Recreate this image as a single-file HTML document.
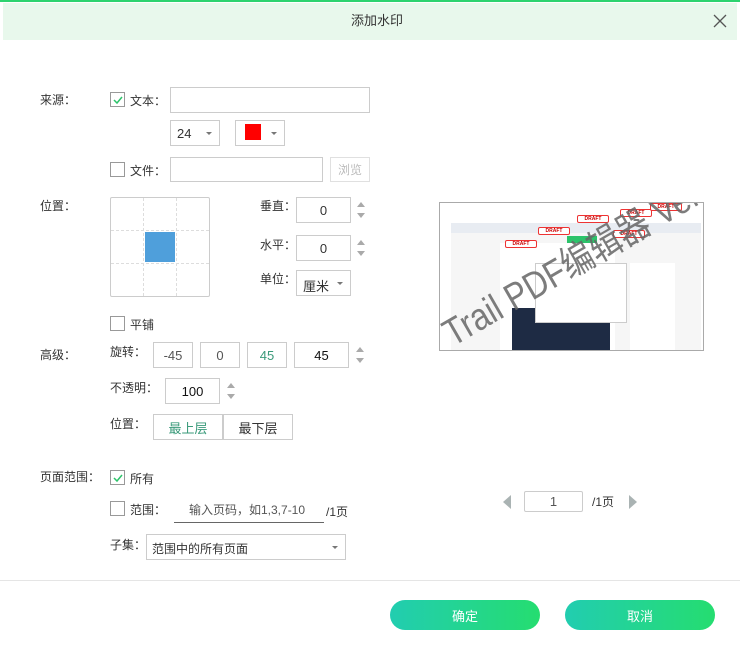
<!DOCTYPE html>
<html><head><meta charset="utf-8"><style>
*{box-sizing:border-box;margin:0;padding:0}
body{width:740px;height:650px;background:#fff;position:relative;overflow:hidden;font-family:"Liberation Sans","Noto Sans CJK SC",sans-serif;font-size:12px;color:#333}
.a{position:absolute}
.box{position:absolute;border:1px solid #ccc;background:#fff}
.cb{position:absolute;width:15px;height:15px;border:1px solid #999;background:#fff}
.t{position:absolute;line-height:14px;white-space:nowrap}
.num{display:flex;align-items:center;justify-content:center;font-size:13px}
.sp{position:absolute;width:8px;height:20px}
.sp:before{content:"";position:absolute;left:0;top:2px;border:4px solid transparent;border-bottom:5px solid #aaa;border-top:0}
.sp:after{content:"";position:absolute;left:0;bottom:2px;border:4px solid transparent;border-top:5px solid #aaa;border-bottom:0}
.dd:after{content:"";position:absolute;right:7px;top:50%;margin-top:-1px;border:3px solid transparent;border-top:3px solid #777}
.btn{position:absolute;border-radius:16px;background:linear-gradient(90deg,#22cdb0,#25dd70);color:#fff;font-size:13px;display:flex;align-items:center;justify-content:center}
.dr{position:absolute;width:32px;height:8px;border:1px solid #e33;border-radius:2px;background:#fff;color:#c00;font-size:5px;line-height:6px;text-align:center;font-weight:bold}
</style></head><body>
<div class="a" style="left:0;top:0;width:740px;height:2px;background:#2dd36f"></div>
<div class="a" style="left:3px;top:3px;width:734px;height:37px;background:#e8f8ec"></div>
<div class="t" style="left:351px;top:14px;font-size:13px">添加水印</div>
<svg class="a" style="left:713px;top:14px" width="14" height="14"><path d="M1 1L13 13M13 1L1 13" stroke="#555" stroke-width="1.3"/></svg>

<div class="t" style="left:40px;top:93px">来源：</div>
<div class="cb" style="left:110px;top:92px"></div>
<svg class="a" style="left:112px;top:94px" width="11" height="11"><path d="M2 6L5 9L10 3" stroke="#2cc36a" stroke-width="1.5" fill="none"/></svg>
<div class="t" style="left:130px;top:94px">文本：</div>
<div class="box" style="left:170px;top:87px;width:200px;height:26px"></div>
<div class="box dd num" style="left:170px;top:120px;width:50px;height:26px;justify-content:flex-start;padding-left:6px">24</div>
<div class="box dd" style="left:235px;top:120px;width:50px;height:26px"></div>
<div class="a" style="left:245px;top:124px;width:16px;height:16px;background:#f00"></div>
<div class="cb" style="left:110px;top:162px"></div>
<div class="t" style="left:130px;top:164px">文件：</div>
<div class="box" style="left:170px;top:157px;width:153px;height:25px"></div>
<div class="box num" style="left:330px;top:157px;width:40px;height:25px;border-color:#e0e0e0;color:#bbb;font-size:12px">浏览</div>

<div class="t" style="left:40px;top:199px">位置：</div>
<div class="box" style="left:110px;top:197px;width:100px;height:100px;border-radius:2px"></div>
<div class="a" style="left:143px;top:198px;height:98px;border-left:1px dashed #ddd"></div>
<div class="a" style="left:176px;top:198px;height:98px;border-left:1px dashed #ddd"></div>
<div class="a" style="left:111px;top:230px;width:98px;border-top:1px dashed #ddd"></div>
<div class="a" style="left:111px;top:263px;width:98px;border-top:1px dashed #ddd"></div>
<div class="a" style="left:145px;top:232px;width:30px;height:30px;background:#4f9fdb"></div>
<div class="t" style="left:260px;top:199px">垂直：</div>
<div class="box num" style="left:296px;top:197px;width:55px;height:26px">0</div>
<div class="sp" style="left:357px;top:200px"></div>
<div class="t" style="left:260px;top:238px">水平：</div>
<div class="box num" style="left:296px;top:235px;width:55px;height:26px">0</div>
<div class="sp" style="left:357px;top:238px"></div>
<div class="t" style="left:260px;top:272px">单位：</div>
<div class="box dd" style="left:296px;top:270px;width:55px;height:26px;padding:5px 0 0 6px;font-size:13px">厘米</div>

<div class="cb" style="left:110px;top:316px"></div>
<div class="t" style="left:130px;top:318px">平铺</div>
<div class="t" style="left:40px;top:348px">高级：</div>
<div class="t" style="left:110px;top:345px">旋转：</div>
<div class="box num" style="left:153px;top:342px;width:40px;height:26px;color:#555">-45</div>
<div class="box num" style="left:200px;top:342px;width:40px;height:26px;color:#555">0</div>
<div class="box num" style="left:247px;top:342px;width:40px;height:26px;color:#3a9a7a">45</div>
<div class="box num" style="left:294px;top:342px;width:55px;height:26px;color:#111">45</div>
<div class="sp" style="left:356px;top:345px"></div>
<div class="t" style="left:110px;top:381px">不透明：</div>
<div class="box num" style="left:165px;top:378px;width:55px;height:26px;color:#111">100</div>
<div class="sp" style="left:227px;top:381px"></div>
<div class="t" style="left:110px;top:417px">位置：</div>
<div class="box num" style="left:153px;top:414px;width:70px;height:26px;color:#3a9a7a">最上层</div>
<div class="box num" style="left:223px;top:414px;width:70px;height:26px">最下层</div>

<div class="a" style="left:439px;top:202px;width:265px;height:149px;border:1px solid #aaa;background:#fff;overflow:hidden">
<div class="a" style="left:11px;top:20px;width:250px;height:128px;background:#f6f6f6"></div>
<div class="a" style="left:11px;top:20px;width:250px;height:10px;background:#e8ecf2"></div>
<div class="a" style="left:60px;top:40px;width:115px;height:108px;background:#fff"></div>
<div class="a" style="left:72px;top:105px;width:98px;height:44px;background:#1e2b44"></div>
<div class="a" style="left:95px;top:60px;width:92px;height:60px;background:#fff;border:1px solid #ccc"></div>
<div class="a" style="left:127px;top:33px;width:30px;height:7px;background:#2cc36a"></div>
<div class="a" style="left:190px;top:60px;width:45px;height:88px;background:#fff"></div>
<div class="dr" style="left:137px;top:12px">DRAFT</div>
<div class="dr" style="left:98px;top:24px">DRAFT</div>
<div class="dr" style="left:180px;top:6px">DRAFT</div>
<div class="dr" style="left:65px;top:37px">DRAFT</div>
<div class="dr" style="left:173px;top:27px">DRAFT</div>
<div class="dr" style="left:210px;top:0px">DRAFT</div>
<div class="t" style="left:16px;top:150px;font-size:38px;line-height:38px;color:#666;opacity:.85;transform:rotate(-30deg) scaleX(0.85);transform-origin:left bottom;margin-top:-38px">Trail PDF编辑器 Version</div>
</div>

<div class="t" style="left:40px;top:470px">页面范围：</div>
<div class="cb" style="left:110px;top:470px"></div>
<svg class="a" style="left:112px;top:472px" width="11" height="11"><path d="M2 6L5 9L10 3" stroke="#2cc36a" stroke-width="1.5" fill="none"/></svg>
<div class="t" style="left:130px;top:472px">所有</div>
<div class="cb" style="left:110px;top:501px"></div>
<div class="t" style="left:130px;top:503px">范围：</div>
<div class="t" style="left:189px;top:503px;color:#555">输入页码，如1,3,7-10</div>
<div class="a" style="left:174px;top:522px;width:150px;border-top:1px solid #666"></div>
<div class="t" style="left:326px;top:505px">/1页</div>
<div class="t" style="left:110px;top:538px">子集：</div>
<div class="box dd" style="left:146px;top:534px;width:200px;height:26px;padding:5px 0 0 5px">范围中的所有页面</div>
<svg class="a" style="left:502px;top:494px" width="10" height="16"><path d="M9 1L1 8L9 15Z" fill="#aab3b3"/></svg>
<div class="box num" style="left:524px;top:491px;width:59px;height:21px;border-radius:2px;color:#555">1</div>
<div class="t" style="left:592px;top:495px">/1页</div>
<svg class="a" style="left:628px;top:494px" width="10" height="16"><path d="M1 1L9 8L1 15Z" fill="#aab3b3"/></svg>

<div class="a" style="left:0;top:580px;width:740px;border-top:1px solid #e5e5e5"></div>
<div class="btn" style="left:390px;top:600px;width:150px;height:30px">确定</div>
<div class="btn" style="left:565px;top:600px;width:150px;height:30px">取消</div>
</body></html>
